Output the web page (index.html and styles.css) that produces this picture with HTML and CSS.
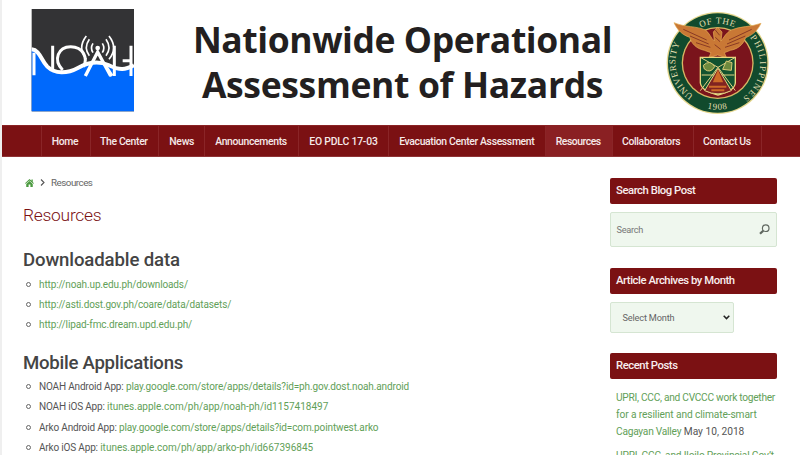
FILE: index.html
```html
<!DOCTYPE html>
<html lang="en">
<head>
<meta charset="utf-8">
<title>Resources - Nationwide Operational Assessment of Hazards</title>
<link rel="stylesheet" href="styles.css">
</head>
<body>
<div class="page">
  <header class="banner">
    <svg class="logo" viewBox="0 0 390 360" width="130" height="120">
      <rect x="35" y="27" width="307" height="307" fill="#333335"/>
      <path d="M35 148C60 150 62 180 82 200C105 222 140 222 175 203C205 187 235 182 265 195C300 212 315 210 342 196V334H35Z" fill="#0069fc"/>
      <g fill="none" stroke="#fff" stroke-width="9">
        <path d="M42 158V226M98 137V212M128 210C98 180 115 140 152 140C190 140 205 175 190 200M283 137V200M333 137V228M283 205V228M308 182H337"/>
        <path d="M196 228L233 156L272 228M258 200L276 228" stroke-width="10"/>
        <path d="M219 130Q210 144 219 158M208 118Q190 144 208 167M199 108Q171 144 199 178M247 130Q256 144 247 158M258 118Q276 144 258 167M267 108Q295 144 267 178" stroke-width="5"/>
        <path d="M35 148C60 150 62 180 82 200C105 222 140 222 175 203C205 187 235 182 265 195C300 212 315 210 342 196" stroke-width="12"/>
      </g>
      <circle cx="233" cy="144" r="7" fill="#fff"/>
    </svg>
    <h1 class="site-title"><span class="t1">Nationwide Operational</span><span class="t2">Assessment of Hazards</span></h1>
    <svg class="seal" viewBox="0 0 390 375" width="130" height="125">
      <defs>
        <path id="ringTop" d="M70 189A118 118 0 0 1 306 189"/>
        <path id="ringLeft" d="M115 286A121 121 0 0 1 86 112"/>
        <path id="ringRight" d="M285 113A121 121 0 0 1 243 304"/>
        <path id="ringBottom" d="M108 304A141 141 0 0 0 268 304"/>
      </defs>
      <circle cx="188" cy="189" r="153" fill="#e4d68c"/>
      <circle cx="188" cy="189" r="149" fill="#114a2d"/>
      <circle cx="188" cy="189" r="108" fill="#d8b765"/>
      <circle cx="188" cy="189" r="104" fill="#7a141c"/>
      <g class="seal-text">
        <text><textPath href="#ringTop" startOffset="50%" text-anchor="middle">OF THE</textPath></text>
        <text><textPath href="#ringLeft" textLength="178">UNIVERSITY</textPath></text>
        <text><textPath href="#ringRight" textLength="206">PHILIPPINES</textPath></text>
        <text><textPath href="#ringBottom" startOffset="50%" text-anchor="middle">1908</textPath></text>
      </g>
      <path d="M57 68C90 82 125 78 151 90C162 96 169 117 178 123L175 96L188 82L201 96L198 123C207 113 212 99 229 90C255 78 285 82 318 70C306 96 289 106 272 113C264 135 248 147 226 151L208 158L215 174L188 165L161 174L168 158L148 151C125 146 110 132 104 112C83 105 67 91 57 68Z" fill="#c97835" stroke="#e5ae55" stroke-width="2"/>
      <path d="M85 88L155 120M105 108L161 132M123 128L166 142M290 88L222 120M271 108L216 132M253 128L210 142M181 90L194 106M181 112L195 125M179 134L197 148" stroke="#8a3a24" stroke-width="3"/>
      <path d="M136 172H241V249Q238 274 189 285Q140 274 136 249Z" fill="#12522f" stroke="#ecd77e" stroke-width="4"/>
      <path d="M136 172L189 202L241 172M189 202L136 272M189 202L241 272M140 225H238" fill="none" stroke="#e1d181" stroke-width="3"/>
      <path d="M189 205L149 272Q189 291 229 272Z" fill="#812321" stroke="#e1d181" stroke-width="3"/>
      <path d="M145 196Q165 177 179 200Q166 222 148 207ZM203 208L214 183L231 188L229 211Z" fill="#6e8a3e" stroke="#d8cb78" stroke-width="3"/>
      <path d="M189 217L178 244H200ZM162 260H214M169 271H208" fill="#ce6b27" stroke="#ce6b27" stroke-width="6"/>
    </svg>
  </header>

  <nav class="menu">
    <a class="m1">Home</a><a class="m2">The Center</a><a class="m3">News</a><a class="m4">Announcements</a><a class="m5">EO PDLC 17-03</a><a class="m6">Evacuation Center Assessment</a><a class="m7 current">Resources</a><a class="m8">Collaborators</a><a class="m9">Contact Us</a><span class="menu-end"></span>
  </nav>

  <div class="columns">
    <main class="content">
      <div class="crumbs">
        <svg width="9" height="8" viewBox="0 0 18 16"><path d="M9 0L13 3.600V1H15.500V6L18 8.300L16.800 9.500L9 2.800L1.200 9.500L0 8.300ZM9 4.200L15.500 9.800V16H10.800V11H7.200V16H2.500V9.800Z" fill="#4b9a3f"/></svg>
        <svg class="chev" width="5" height="7" viewBox="0 0 5 7"><path d="M1 .5L4 3.500L1 6.500" fill="none" stroke="#555" stroke-width="1.100"/></svg>
        <span>Resources</span>
      </div>
      <h2 class="page-title">Resources</h2>
      <h3 class="h-data">Downloadable data</h3>
      <ul>
        <li><a class="u1">http://noah.up.edu.ph/downloads/</a></li>
        <li><a class="u1">http://asti.dost.gov.ph/coare/data/datasets/</a></li>
        <li><a class="u3">http://lipad-fmc.dream.upd.edu.ph/</a></li>
      </ul>
      <h3 class="h-apps">Mobile Applications</h3>
      <ul>
        <li>NOAH Android App: <a class="u4">play.google.com/store/apps/details?id=ph.gov.dost.noah.android</a></li>
        <li>NOAH iOS App: <a>itunes.apple.com/ph/app/noah-ph/id1157418497</a></li>
        <li>Arko Android App: <a class="u4">play.google.com/store/apps/details?id=com.pointwest.arko</a></li>
        <li>Arko iOS App: <a>itunes.apple.com/ph/app/arko-ph/id667396845</a></li>
      </ul>
    </main>

    <aside class="sidebar">
      <h4>Search Blog Post</h4>
      <div class="search"><span>Search</span>
        <svg width="11" height="11" viewBox="0 0 11 11" fill="none" stroke="#606860"><circle cx="6.700" cy="4.200" r="3.300" stroke-width="1.200"/><path d="M4.200 6.700L1 9.800" stroke-width="2.200"/></svg>
      </div>
      <h4 class="archives">Article Archives by Month</h4>
      <div class="select"><span>Select Month</span>
        <svg width="7" height="5" viewBox="0 0 7 5"><path d="M.7 .8L3.500 3.600L6.300 .8" fill="none" stroke="#222" stroke-width="1.500"/></svg>
      </div>
      <h4 class="recent">Recent Posts</h4>
      <div class="posts">
        <p><a class="p1">UPRI, CCC, and CVCCC work together</a><br><a class="p2">for a resilient and climate-smart</a><br><a class="p3">Cagayan Valley</a> May 10, 2018</p>
        <p><a class="p4">UPRI, CCC, and Iloilo Provincial Gov’t</a></p>
      </div>
    </aside>
  </div>
</div>
</body>
</html>
```
FILE: styles.css
```css
*, *::before { box-sizing: border-box; }
body { margin: 0; background: #efefef; font-family: Roboto, sans-serif; color: #555; overflow: hidden; }
h1, h2, h3, h4, p, ul { margin: 0; padding: 0; }
.page { margin-left: 2px; height: 455px; background: #fff; overflow: hidden; }

.banner { display: flex; height: 125px; padding-left: 18px; }
.logo { flex: none; }
.site-title { width: 505px; padding-top: 17px; font: 700 35.5px/45px "Open Sans", sans-serif; color: #231f20; display: flex; flex-direction: column; align-items: center; white-space: nowrap; }
.t1 { letter-spacing: -.44px; }
.t2 { letter-spacing: -.34px; }
.seal { flex: none; }
.seal-text { font: 27px "Liberation Serif", serif; fill: #e3dfb0; letter-spacing: 2px; }

.menu { height: 32px; background: #7b1113; border-top: 1px solid #8a2325; border-bottom: 1px solid #8f3335; padding-left: 38.500px; display: flex; }
.menu a { flex: none; border-left: 1px solid #8a2527; padding-left: 10.200px; color: #f6e9e9; font-size: 10.400px; font-weight: 500; line-height: 31px; letter-spacing: -.34px; white-space: nowrap; }
.menu .m1 { width: 49.500px; }
.menu .m2 { width: 68px; padding-left: 9px; }
.menu .m3 { width: 46px; letter-spacing: -.25px; }
.menu .m4 { width: 94px; }
.menu .m5 { width: 90px; letter-spacing: -.18px; }
.menu .m6 { width: 156.500px; }
.menu .m7 { width: 67px; letter-spacing: -.45px; }
.menu .m8 { width: 81px; padding-left: 9.500px; }
.menu .m9 { width: 68.500px; padding-left: 9.500px; }
.menu .current { background: #8a2023; }
.menu-end { width: 1px; background: #8a2527; }

.columns { display: flex; }
.content { width: 607.500px; padding: 18px 0 0 21px; }
.crumbs { display: flex; align-items: center; height: 15px; font-size: 9.800px; letter-spacing: -.5px; padding-left: 2px; color: #666; }
.crumbs .chev { margin: 0 6px; }
.page-title { margin-top: 13px; font-size: 17.400px; font-weight: 300; line-height: 24px; letter-spacing: -.25px; color: #7b1113; }
h3 { font-size: 18.600px; font-weight: 500; line-height: 26px; color: #444; }
.h-data { margin-top: 20px; letter-spacing: -.13px; }
.h-apps { margin-top: 15px; letter-spacing: -.26px; }
ul { list-style: none; padding-top: 1px; }
li { display: flex; align-items: center; height: 20.200px; font-size: 10px; letter-spacing: -.17px; white-space: pre; }
li::before { content: ""; width: 5px; height: 5px; border: 1px solid #666; border-radius: 50%; margin: 0 8.500px 0 2.500px; }
a { color: #62a058; letter-spacing: 0; }
.u1 { letter-spacing: -.13px; }
.u3 { letter-spacing: -.1px; }
.u4 { letter-spacing: -.12px; }

.sidebar { width: 167px; padding-top: 21px; }
h4 { height: 26px; padding-left: 6.500px; border-radius: 2px; background: #7b1113; color: #f8eeee; font-size: 11.300px; font-weight: 500; line-height: 25px; letter-spacing: -.45px; }
.search, .select { display: flex; align-items: center; justify-content: space-between; margin-top: 8px; background: #eff7ee; border: 1px solid #d5e5d2; border-radius: 2px; }
.search { height: 35px; padding: 0 6px; font-size: 9.200px; letter-spacing: -.3px; color: #777; }
.archives { margin-top: 21px; }
.select { width: 124px; height: 31px; padding: 0 3px 0 12px; font-size: 9.200px; letter-spacing: -.17px; color: #666; }
.recent { margin-top: 20px; }
.posts { padding: 9.500px 0 0 6.500px; font-size: 10.200px; line-height: 17.300px; white-space: nowrap; }
.posts p { margin-bottom: 6.500px; }
.p1 { letter-spacing: -.28px; }
.p2 { letter-spacing: -.11px; }
.p3 { letter-spacing: -.25px; }
.p4 { letter-spacing: -.18px; }
```
